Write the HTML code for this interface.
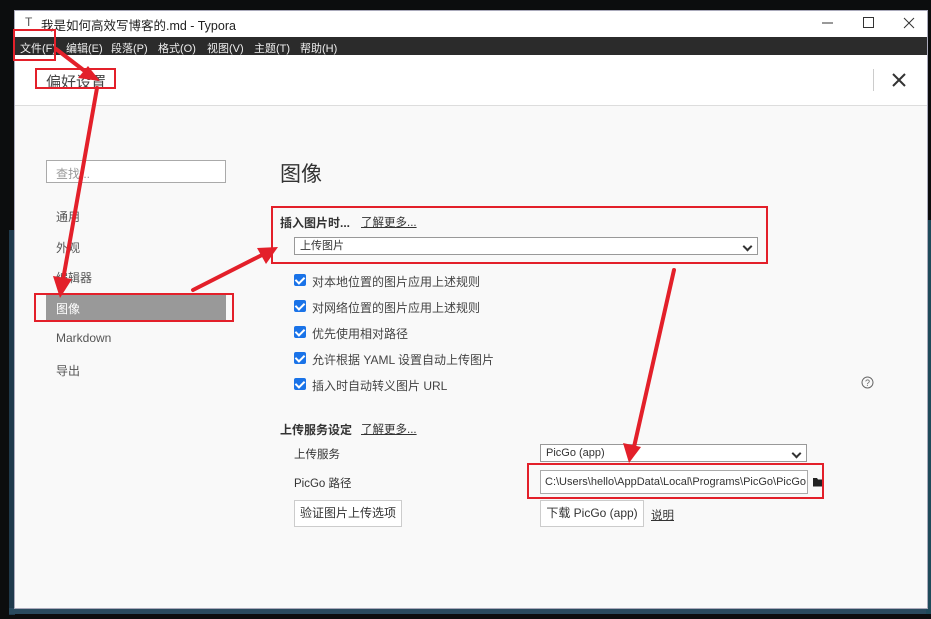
<!DOCTYPE html>
<html><head><meta charset="utf-8"><style>
*{margin:0;padding:0;box-sizing:border-box}
body{width:931px;height:619px;background:#0c0d0e;position:relative;overflow:hidden;font-family:"Liberation Sans","Noto Sans CJK SC",sans-serif;color:#333}
.a{position:absolute}
.win{left:14px;top:10px;width:914px;height:599px;background:#f9f9f9;border:1px solid #aab}
.t{font-size:12px;white-space:nowrap}
.m{position:absolute;top:40px;color:#eee;font-size:11px;white-space:nowrap}
.cb{position:absolute;width:12px;height:12px;background:#1a73e8;border-radius:2px}
.cb:after{content:"";position:absolute;left:3px;top:1px;width:4px;height:7px;border:solid #fff;border-width:0 2px 2px 0;transform:rotate(45deg)}
.sel{position:absolute;background:#fff;border:1px solid #999;font-size:11px;padding-left:5px}
.sel:after{content:"";position:absolute;right:6px;top:5px;width:5px;height:5px;border:solid #333;border-width:0 2px 2px 0;transform:rotate(45deg)}
.btn{position:absolute;background:#fff;border:1px solid #ccc;font-size:12px;text-align:center}
u{text-decoration:underline}
</style></head><body>
<div class="a" style="left:9px;top:230px;width:6px;height:385px;background:#1f3a4c"></div>
<div class="a" style="left:9px;top:608px;width:922px;height:6px;background:#2a4a5e"></div>
<div class="a" style="left:926px;top:220px;width:5px;height:394px;background:#1f4a5a"></div>
<div class="a win"></div>
<!-- titlebar -->
<div class="a" style="left:15px;top:11px;width:912px;height:26px;background:#fff"></div>
<div class="a t" style="left:25px;top:15px;font-size:12px;color:#555">T</div>
<div class="a t" style="left:41px;top:15px;font-size:12.5px;color:#222">我是如何高效写博客的.md - Typora</div>
<svg class="a" style="left:818px;top:15px" width="100" height="16"><path d="M4 8h11" stroke="#333"/><rect x="45.5" y="2.5" width="10" height="10" fill="none" stroke="#333"/><path d="M86 3l10 10M96 3l-10 10" stroke="#333"/></svg>
<!-- menu -->
<div class="a" style="left:15px;top:37px;width:912px;height:18px;background:#2b2b2b"></div>
<div class="m" style="left:20px">文件(F)</div>
<div class="m" style="left:66px">编辑(E)</div>
<div class="m" style="left:111px">段落(P)</div>
<div class="m" style="left:158px">格式(O)</div>
<div class="m" style="left:207px">视图(V)</div>
<div class="m" style="left:254px">主题(T)</div>
<div class="m" style="left:300px">帮助(H)</div>
<!-- header -->
<div class="a" style="left:15px;top:55px;width:912px;height:51px;background:#fff;border-bottom:1px solid #ddd"></div>
<div class="a t" style="left:46px;top:71px;font-size:15px;color:#444">偏好设置</div>
<div class="a" style="left:873px;top:69px;width:1px;height:22px;background:#ccc"></div>
<svg class="a" style="left:891px;top:72px" width="16" height="16"><path d="M2 2l12 12M14 2L2 14" stroke="#333" stroke-width="2"/></svg>
<!-- sidebar -->
<div class="a" style="left:46px;top:160px;width:180px;height:23px;background:#fff;border:1px solid #aaa"></div>
<div class="a t" style="left:56px;top:165px;color:#999">查找...</div>
<div class="a t" style="left:56px;top:208px;color:#555">通用</div>
<div class="a t" style="left:56px;top:239px;color:#555">外观</div>
<div class="a t" style="left:56px;top:269px;color:#555">编辑器</div>
<div class="a" style="left:46px;top:295px;width:180px;height:25px;background:#999"></div>
<div class="a t" style="left:56px;top:300px;color:#fff">图像</div>
<div class="a t" style="left:56px;top:331px;color:#555">Markdown</div>
<div class="a t" style="left:56px;top:362px;color:#555">导出</div>
<!-- content -->
<div class="a t" style="left:280px;top:158px;font-size:21px;color:#333">图像</div>
<div class="a t" style="left:280px;top:214px;font-weight:bold;font-size:12px">插入图片时...</div>
<div class="a t" style="left:361px;top:214px;font-size:11.5px"><u>了解更多...</u></div>
<div class="sel" style="left:294px;top:237px;width:464px;height:18px;line-height:16px">上传图片</div>
<div class="cb" style="left:294px;top:274px"></div><div class="a t" style="left:312px;top:273px;color:#444">对本地位置的图片应用上述规则</div>
<div class="cb" style="left:294px;top:300px"></div><div class="a t" style="left:312px;top:299px;color:#444">对网络位置的图片应用上述规则</div>
<div class="cb" style="left:294px;top:326px"></div><div class="a t" style="left:312px;top:325px;color:#444">优先使用相对路径</div>
<div class="cb" style="left:294px;top:352px"></div><div class="a t" style="left:312px;top:351px;color:#444">允许根据 YAML 设置自动上传图片</div>
<div class="cb" style="left:294px;top:378px"></div><div class="a t" style="left:312px;top:377px;color:#444">插入时自动转义图片 URL</div>
<svg class="a" style="left:861px;top:376px" width="13" height="13"><circle cx="6.5" cy="6.5" r="5.5" fill="none" stroke="#666"/><text x="6.5" y="10" font-size="9" text-anchor="middle" fill="#666" font-family="Liberation Sans">?</text></svg>
<div class="a t" style="left:280px;top:421px;font-weight:bold">上传服务设定</div>
<div class="a t" style="left:361px;top:421px;font-size:11.5px"><u>了解更多...</u></div>
<div class="a t" style="left:294px;top:446px;font-size:11.5px">上传服务</div>
<div class="sel" style="left:540px;top:444px;width:267px;height:18px;line-height:16px">PicGo (app)</div>
<div class="a t" style="left:294px;top:475px;font-size:11.5px">PicGo 路径</div>
<div class="a" style="left:540px;top:470px;width:268px;height:24px;background:#fff;border:1px solid #aaa;font-size:11px;line-height:22px;padding-left:4px;white-space:nowrap;overflow:hidden">C:\Users\hello\AppData\Local\Programs\PicGo\PicGo.</div>
<svg class="a" style="left:813px;top:477px" width="11" height="10"><path d="M0 1h4l1 1.5h5v7H0z" fill="#222"/></svg>
<div class="btn" style="left:294px;top:500px;width:108px;height:27px;line-height:25px">验证图片上传选项</div>
<div class="btn" style="left:540px;top:500px;width:104px;height:27px;line-height:25px">下载 PicGo (app)</div>
<div class="a t" style="left:651px;top:507px;font-size:11.5px"><u>说明</u></div>
<!-- annotations -->
<svg class="a" style="left:0;top:0" width="931" height="619">
<g fill="none" stroke="#e3202a" stroke-width="2">
<rect x="14" y="30" width="41" height="30"/>
<rect x="36" y="69" width="79" height="19"/>
<rect x="272" y="207" width="495" height="56"/>
<rect x="35" y="294" width="198" height="27"/>
<rect x="528" y="464" width="295" height="34"/>
</g>
<g stroke="#e3202a" stroke-width="4" stroke-linecap="round">
<line x1="56" y1="49" x2="86" y2="72"/>
<line x1="97" y1="88" x2="63" y2="280"/>
<line x1="193" y1="290" x2="262" y2="255"/>
<line x1="674" y1="270" x2="634" y2="447"/>
</g>
<g fill="#e3202a">
<polygon points="100,81 78,78 88,66"/>
<polygon points="60,298 53,276 72,279"/>
<polygon points="278,247 266,264 257,248"/>
<polygon points="629,463 623,443 641,447"/>
</g>
</svg>
</body></html>
